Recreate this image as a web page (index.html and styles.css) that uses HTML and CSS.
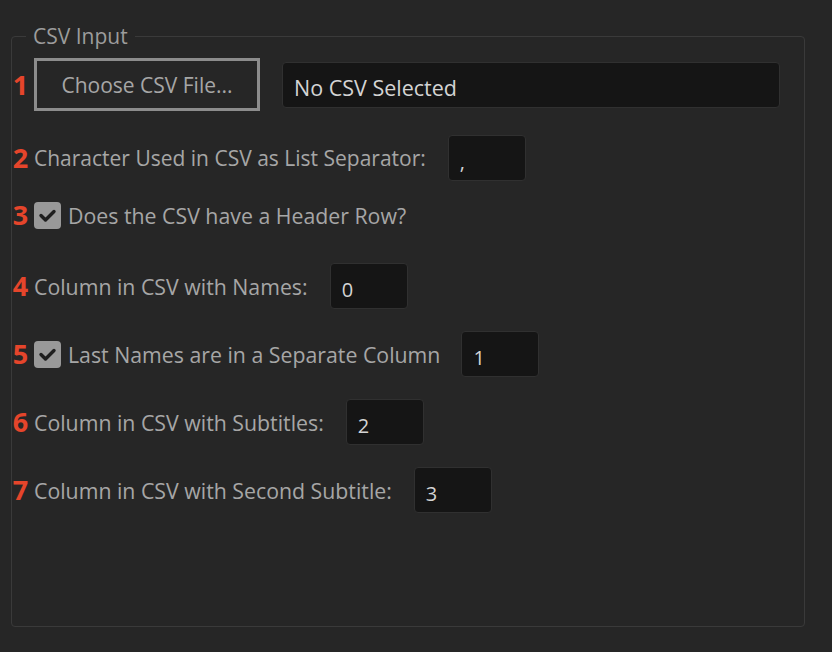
FILE: index.html
```html
<!DOCTYPE html>
<html>
<head>
<meta charset="utf-8">
<link rel="stylesheet" href="styles.css">
</head>
<body>
<fieldset class="panel">
  <legend class="panel-title">CSV Input</legend>
  <div class="row row-file">
    <span class="num">1</span>
    <button class="btn">Choose CSV File...</button>
    <div class="field field-wide">No CSV Selected</div>
  </div>
  <div class="row row-2">
    <span class="num">2</span>
    <span class="label label-long">Character Used in CSV as List Separator:</span>
    <div class="field">,</div>
  </div>
  <div class="row row-3">
    <span class="num">3</span>
    <span class="check"><svg viewBox="0 0 27 27" width="27" height="27"><path d="M7 13.5 L11.5 18 L20 9.5" fill="none" stroke="#1f1f1f" stroke-width="3.4" stroke-linecap="round" stroke-linejoin="round"/></svg></span>
    <span class="label label-check">Does the CSV have a Header Row?</span>
  </div>
  <div class="row row-4">
    <span class="num">4</span>
    <span class="label">Column in CSV with Names:</span>
    <div class="field">0</div>
  </div>
  <div class="row row-5">
    <span class="num">5</span>
    <span class="check"><svg viewBox="0 0 27 27" width="27" height="27"><path d="M7 13.5 L11.5 18 L20 9.5" fill="none" stroke="#1f1f1f" stroke-width="3.4" stroke-linecap="round" stroke-linejoin="round"/></svg></span>
    <span class="label label-check">Last Names are in a Separate Column</span>
    <div class="field field-gap">1</div>
  </div>
  <div class="row row-6">
    <span class="num">6</span>
    <span class="label">Column in CSV with Subtitles:</span>
    <div class="field">2</div>
  </div>
  <div class="row row-7">
    <span class="num">7</span>
    <span class="label">Column in CSV with Second Subtitle:</span>
    <div class="field">3</div>
  </div>
</fieldset>
</body>
</html>
```

FILE: styles.css
```css
html, body {
  margin: 0;
  padding: 0;
  background: #262626;
  font-family: "Open Sans", "Noto Sans", sans-serif;
  color: #a3a3a3;
}

body {
  padding: 25px 0 0 0;
  height: 652px;
  box-sizing: border-box;
}

.panel {
  margin: 0 0 0 11px;
  width: 794px;
  height: 602px;
  box-sizing: border-box;
  border: 1.5px solid #3a3a3a;
  border-radius: 4px;
  padding: 11px 0 0 22px;
  display: block;
}

.panel-title {
  font-size: 21px;
  color: #9c9c9c;
  padding: 0 7px;
  margin-left: -8px;
  line-height: 22px;
}

.row {
  display: flex;
  align-items: center;
}

.num {
  width: 27px;
  margin-left: -27px;
  font-size: 27px;
  font-weight: 700;
  color: #e5452b;
  text-align: center;
  line-height: 30px;
}

.label {
  font-size: 21.3px;
  color: #a6a6a6;
  white-space: nowrap;
}

.label-long {
  font-size: 21px;
}

.label-check {
  margin-left: 7px;
}

.btn {
  width: 226px;
  height: 53px;
  box-sizing: border-box;
  background: #262626;
  border: 3px solid #8c8c8c;
  color: #a6a6a6;
  font-family: inherit;
  font-size: 21px;
  padding: 0;
}

.field {
  width: 78px;
  height: 46px;
  box-sizing: border-box;
  background: #151515;
  border: 1.5px solid #303030;
  border-radius: 4px;
  color: #d4d4d4;
  font-size: 20px;
  padding: 12px 0 0 11px;
  margin-left: 22px;
}

.field-wide {
  width: 498px;
  height: 46px;
  margin-left: 22px;
  font-size: 21.5px;
  padding: 10px 0 0 11px;
}

.field-gap {
  margin-left: 21px;
}

.check {
  width: 27px;
  height: 27px;
  border-radius: 4px;
  background: #999999;
  display: flex;
}

.row-file { margin-top: 0; }
.row-2 { margin-top: 24px; }
.row-3 { margin-top: 19px; }
.row-4 { margin-top: 33px; }
.row-5 { margin-top: 22px; }
.row-6 { margin-top: 22px; }
.row-7 { margin-top: 22px; }
```
